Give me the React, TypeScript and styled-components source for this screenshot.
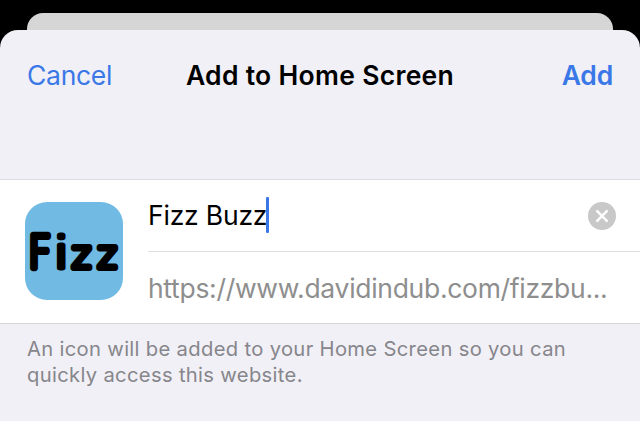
import React from "react";
import styled, { createGlobalStyle } from "styled-components";

const GlobalStyle = createGlobalStyle`
  * { box-sizing: border-box; }
  body {
    margin: 0;
    background: #000;
    font-family: Inter, "Liberation Sans", sans-serif;
    overflow: hidden;
  }
`;

const Screen = styled.main`
  width: 640px;
  height: 421px;
  padding-top: 13px;
  display: flex;
  flex-direction: column;
  background: #000;
  overflow: hidden;
`;

const PageBehind = styled.div`
  height: 33px;
  flex: none;
  margin: 0 27px -16.5px;
  border-radius: 16px 16px 0 0;
  background: #d6d6d6;
`;

const Sheet = styled.section`
  flex: 1;
  border-radius: 18px 18px 0 0;
  background: #f1f0f6;
  position: relative;
`;

const NavBar = styled.header`
  height: 149.5px;
  padding: 28.5px 27px 0;
  display: grid;
  grid-template-columns: 1fr auto 1fr;
  align-items: start;
`;

const NavButton = styled.button<{ $primary?: boolean }>`
  border: 0;
  padding: 0;
  background: none;
  font-family: inherit;
  font-size: 26.5px;
  line-height: 34px;
  color: #3b78e7;
  font-weight: ${(p) => (p.$primary ? 600 : 400)};
  letter-spacing: ${(p) => (p.$primary ? "-0.2px" : "-0.3px")};
  justify-self: ${(p) => (p.$primary ? "end" : "start")};
`;

const Title = styled.h1`
  margin: 0;
  font-size: 26.5px;
  line-height: 34px;
  font-weight: 600;
  letter-spacing: 0.3px;
  color: #000;
  white-space: nowrap;
`;

const Card = styled.div`
  height: 145px;
  display: flex;
  background: #fff;
  border-top: 1px solid #dddde1;
  border-bottom: 1px solid #d3d3d8;
`;

const AppIcon = styled.svg`
  flex: none;
  display: block;
  width: 98px;
  height: 98px;
  margin: 22px 25px 0 25px;
  border-radius: 22px;
  background: #70bae3;
`;

const IconLetter = styled.text<{ $stroke: number }>`
  font-family: "DejaVu Sans", sans-serif;
  font-weight: 200;
  fill: #000;
  stroke: #000;
  stroke-width: ${(p) => p.$stroke}px;
  stroke-linejoin: round;
`;

const Fields = styled.div`
  flex: 1;
  min-width: 0;
  display: flex;
  flex-direction: column;
`;

const NameRow = styled.div`
  height: 72px;
  display: flex;
  align-items: center;
  padding-right: 24px;
  border-bottom: 1px solid #dfdfe1;
`;

const NameText = styled.span`
  margin-top: -2px;
  font-size: 26.5px;
  line-height: 34px;
  letter-spacing: -0.2px;
  color: #000;
`;

const Caret = styled.span`
  width: 3px;
  height: 36px;
  margin: -2px 0 0 -1.5px;
  border-radius: 1px;
  background: #3b78e7;
`;

const ClearButton = styled.button`
  width: 28px;
  height: 28px;
  margin-left: auto;
  padding: 0;
  border: 0;
  border-radius: 50%;
  background: #c8c8c8;

  svg { display: block; }
`;

const UrlRow = styled.div`
  height: 71px;
  padding-top: 19px;
  font-size: 26.5px;
  line-height: 34px;
  letter-spacing: -0.3px;
  color: #8e8e8e;
  white-space: nowrap;
`;

const Hint = styled.p`
  margin: 0;
  padding: 12px 27px;
  font-size: 20.2px;
  line-height: 26px;
  letter-spacing: 0.33px;
  color: #86868b;
`;

export default function App() {
  return (
    <>
      <GlobalStyle />
      <Screen>
        <PageBehind />
        <Sheet>
          <NavBar>
            <NavButton>Cancel</NavButton>
            <Title>Add to Home Screen</Title>
            <NavButton $primary>Add</NavButton>
          </NavBar>
          <Card>
            <AppIcon viewBox="0 0 98 98" role="img" aria-label="Fizz">
              <IconLetter transform="translate(3 65.7) scale(.92 1)" fontSize="44.5" $stroke={6.4}>F</IconLetter>
              <IconLetter transform="translate(29.2 66.2) scale(1.2 1)" fontSize="43" $stroke={5.2}>i</IconLetter>
              <IconLetter transform="translate(46.8 65.9) scale(.97 1)" x="0 26.5" fontSize="38" $stroke={6}>zz</IconLetter>
            </AppIcon>
            <Fields>
              <NameRow>
                <NameText>Fizz Buzz</NameText>
                <Caret />
                <ClearButton aria-label="Clear text">
                  <svg width="28" height="28" viewBox="0 0 28 28">
                    <path d="M9.2 9.2 18.8 18.8M18.8 9.2 9.2 18.8" stroke="#fff" strokeWidth="2.5" strokeLinecap="round" />
                  </svg>
                </ClearButton>
              </NameRow>
              <UrlRow>https://www.davidindub.com/fizzbu...</UrlRow>
            </Fields>
          </Card>
          <Hint>
            An icon will be added to your Home Screen so you can
            <br />
            quickly access this website.
          </Hint>
        </Sheet>
      </Screen>
    </>
  );
}
